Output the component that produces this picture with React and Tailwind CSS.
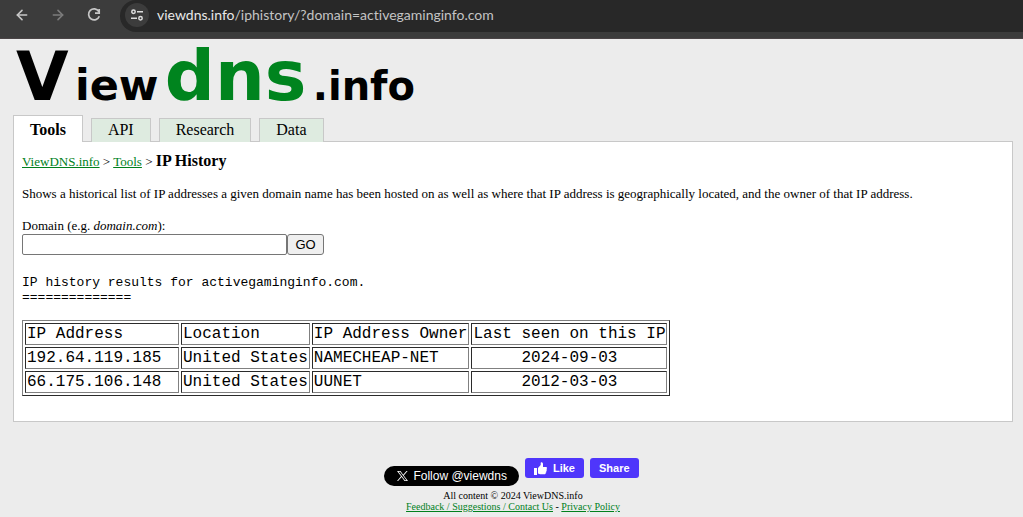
import { ArrowLeft, ArrowRight } from "lucide-react";

const tabs = ["Tools", "API", "Research", "Data"];
const rows = [
  ["192.64.119.185", "United States", "NAMECHEAP-NET", "2024-09-03"],
  ["66.175.106.148", "United States", "UUNET", "2012-03-03"],
];
const headings = ["IP Address", "Location", "IP Address Owner", "Last seen on this IP"];
const cell = "border border-t-[#2b2b2b] border-l-[#2b2b2b] border-r-[#808080] border-b-[#808080] p-px font-normal whitespace-nowrap";

function BrowserBar() {
  return (
    <header className="flex h-[39px] items-start border-b border-[#4a4446] bg-[#3c3c3c] pl-[14px]">
      <div className="flex h-[30px] items-center gap-5 pr-[18px]">
        <button aria-label="Back" className="text-[#c7c7c7]"><ArrowLeft size={16} strokeWidth={2.4} /></button>
        <button aria-label="Forward" className="text-[#7c7c7c]"><ArrowRight size={16} strokeWidth={2.4} /></button>
        <button aria-label="Reload" className="text-[#c7c7c7]">
          <svg width="16" height="16" viewBox="0 0 16 16" fill="none" stroke="currentColor" strokeWidth="1.7">
            <path d="M12.8 4.5A5.5 5.5 0 1 0 13.3 9.2M13.2 2v4.2H9" />
          </svg>
        </button>
      </div>
      <div className="flex h-8 grow items-start rounded-l-2xl bg-[#282828] pl-[5px]">
        <button aria-label="Site information" className="mt-[3px] flex size-6 items-center justify-center rounded-full bg-[#3c3c3c] text-[#dedede]">
          <svg width="14" height="14" viewBox="0 0 14 14" fill="none" stroke="currentColor" strokeWidth="1.5">
            <circle cx="3.5" cy="3.8" r="1.7" />
            <path d="M7 3.8h6M1 10.2h6" />
            <circle cx="10.5" cy="10.2" r="1.7" />
          </svg>
        </button>
        <p className="pl-2 font-['Lato',sans-serif] text-[14px] leading-[30px] whitespace-nowrap text-[#c4c4c4] [font-variant-ligatures:none]">
          <span className="text-[#e8e8e8]">viewdns.info</span>/iphistory/?domain=activegaminginfo.com
        </p>
      </div>
    </header>
  );
}

function Logo() {
  return (
    <a href="#home" className="flex h-[76px] w-[402px] items-baseline justify-between pl-[3px] font-['DejaVu_Sans',sans-serif] leading-[74px] font-bold text-black">
      <span className="text-[68px]">V</span>
      <span className="text-[43px]">iew</span>
      <span className="text-[70px] text-[#00841e]">dns</span>
      <span className="text-[40px]">.info</span>
    </a>
  );
}

function Results() {
  return (
    <table className="mt-[15px] border-separate border-spacing-[2px] border border-t-[#808080] border-r-[#2b2b2b] border-b-[#2b2b2b] border-l-[#808080] font-['Liberation_Mono',monospace] text-[16px] leading-[18px]">
      <thead>
        <tr>
          {headings.map((h, i) => (
            <th key={h} scope="col" className={i === 0 ? `${cell} w-[154px] text-left` : `${cell} text-left`}>{h}</th>
          ))}
        </tr>
      </thead>
      <tbody>
        {rows.map((r) => (
          <tr key={r[0]}>
            {r.map((v, i) => (
              <td key={i} className={i === 3 ? `${cell} text-center` : cell}>{v}</td>
            ))}
          </tr>
        ))}
      </tbody>
    </table>
  );
}

function Footer() {
  return (
    <footer className="pt-9 text-center text-[10px] leading-[11px]">
      <div className="mb-1 flex items-start justify-center gap-[6px] pr-[3px] font-['Liberation_Sans',sans-serif] text-white">
        <a href="#follow" className="mt-2 flex h-5 items-center gap-1 rounded-full bg-black px-3 text-[12px] leading-5">
          <svg width="13" height="12" viewBox="0 0 24 24" fill="currentColor">
            <path fillRule="evenodd" d="M1 2h7l5.4 7.3L20 2h2.3l-7.8 8.8L23 22h-7l-5.8-7.8L3.2 22H1l8.1-9.3zm3.2 1.7L17 20.3h3L7.1 3.7z" />
          </svg>
          Follow @viewdns
        </a>
        <button className="flex h-5 items-center gap-[6px] rounded-[3px] bg-[#4f36fb] px-[9px] text-[11px] font-bold">
          <svg width="13" height="13" viewBox="0 0 13 13" fill="currentColor">
            <path d="M0 6h3v7H0zM4 6l2.7-3V.8C6.7-.2 9-.1 9 2v3h3c1.3.2 1.3 1.6.4 2 .8.6.5 1.7-.3 1.9.6.7.2 1.6-.5 1.8.3.8-.2 1.6-1.2 1.6H6L4 11.5z" />
          </svg>
          Like
        </button>
        <button className="flex h-5 items-center rounded-[3px] bg-[#4f36fb] px-[9px] pt-px text-[11px] font-bold">Share</button>
      </div>
      <p>All content © 2024 ViewDNS.info</p>
      <p>
        <a href="#contact" className="text-[#00801c] underline">Feedback / Suggestions / Contact Us</a> -{" "}
        <a href="#privacy" className="text-[#00801c] underline">Privacy Policy</a>
      </p>
    </footer>
  );
}

export default function App() {
  return (
    <div className="min-h-screen bg-[#ececec] font-['Liberation_Serif',serif] text-black">
      <BrowserBar />
      <div className="pr-[10px] pl-[13px]">
        <Logo />
        <nav className="relative -mb-px flex items-end gap-2 text-[16px]">
          {tabs.map((t, i) => (
            <a
              key={t}
              href={`#${t.toLowerCase()}`}
              className={
                i === 0
                  ? "h-[27px] border border-b-0 border-[#c8c8c8] bg-white px-4 leading-7 font-bold"
                  : "h-6 border border-b-0 border-[#c8c8c8] bg-[#deebe0] px-4 leading-[22px]"
              }
            >
              {t}
            </a>
          ))}
        </nav>
        <main className="border border-[#c8c8c8] bg-white px-2 pt-[10px] pb-[25px] text-[13px] leading-4">
          <div className="leading-[18px]">
            <a href="#home" className="text-[#00801c] underline">ViewDNS.info</a> &gt;{" "}
            <a href="#tools" className="text-[#00801c] underline">Tools</a> &gt;{" "}
            <h1 className="inline text-[16px] font-bold">IP History</h1>
          </div>
          <p className="mt-[15px]">
            Shows a historical list of IP addresses a given domain name has been hosted on as well as where that IP address is geographically located, and the owner of that IP address.
          </p>
          <form className="mt-4" onSubmit={(e) => e.preventDefault()}>
            <label htmlFor="domain" className="block">Domain (e.g. <i>domain.com</i>):</label>
            <div className="flex font-['Liberation_Sans',sans-serif] text-[13px]">
              <input id="domain" className="h-[21px] w-[265px] rounded-[2px] border border-[#767676] bg-white px-1" />
              <button className="h-[21px] w-[37px] rounded-[3px] border border-[#767676] bg-[#efefef] leading-[19px]">GO</button>
            </div>
          </form>
          <div className="mt-5 font-['Liberation_Mono',monospace] leading-[15px]">
            <p>IP history results for activegaminginfo.com.</p>
            <p>==============</p>
          </div>
          <Results />
        </main>
        <Footer />
      </div>
    </div>
  );
}
